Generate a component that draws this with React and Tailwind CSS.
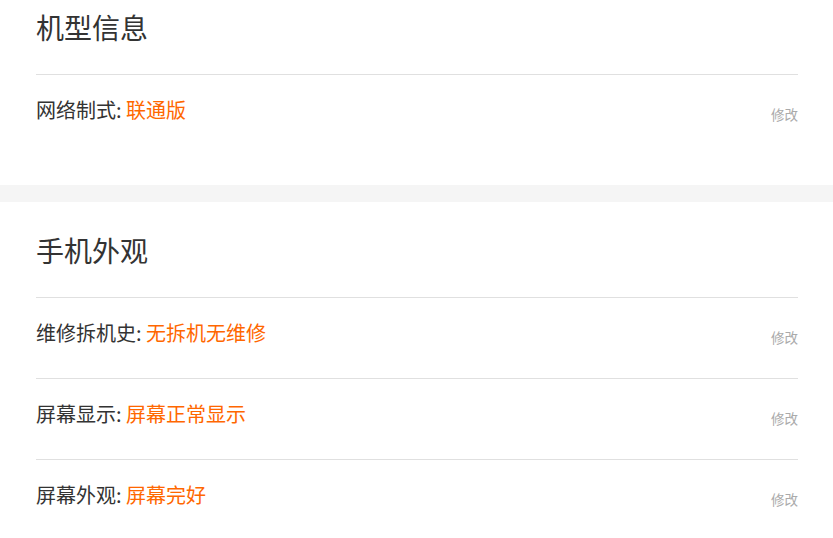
const SECTIONS = [
  {
    title: '机型信息',
    first: true,
    rows: [{ label: '网络制式', value: '联通版' }],
  },
  {
    title: '手机外观',
    rows: [
      { label: '维修拆机史', value: '无拆机无维修' },
      { label: '屏幕显示', value: '屏幕正常显示' },
      { label: '屏幕外观', value: '屏幕完好' },
    ],
  },
]

function Row({ label, value }) {
  return (
    <div className="h-[81px] border-t border-[#e0e0e0] pt-[25px] flex items-start justify-between">
      <div className="text-[20px] leading-[20px] text-[#333]">
        {label}: <span className="text-[#ff6700]">{value}</span>
      </div>
      <button className="mt-[7px] text-[13.5px] leading-[14px] text-[#aaa]">修改</button>
    </div>
  )
}

export default function App() {
  return (
    <div className="w-[833px] h-[538px] overflow-hidden bg-white" style={{ fontFamily: '"Noto Sans CJK SC", "Liberation Sans", sans-serif' }}>
      {SECTIONS.map((s, i) => (
        <div key={s.title}>
          {i > 0 && <div className="h-[17px] bg-[#f5f5f5]" />}
          <section className="pl-[36px] pr-[35px] pb-[30px]">
            <h2 className={`${s.first ? 'pt-[7px]' : 'pt-[28px]'} pb-[27px] text-[28px] leading-[40px] font-normal text-[#333]`}>
              {s.title}
            </h2>
            {s.rows.map(r => <Row key={r.label} {...r} />)}
          </section>
        </div>
      ))}
    </div>
  )
}
